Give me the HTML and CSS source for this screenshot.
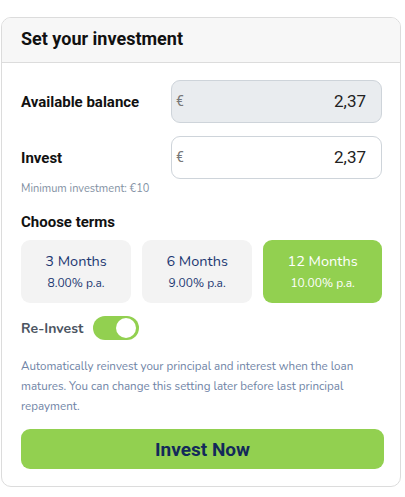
FILE: index.html
```html
<!DOCTYPE html>
<html>
<head>
<meta charset="utf-8">
<link rel="stylesheet" href="styles.css">
</head>
<body>
<div class="card">
  <div class="card-header">Set your investment</div>
  <div class="card-body">
    <div class="field-row">
      <div class="field-label">Available balance</div>
      <div class="amount amount-disabled"><span class="cur">€</span><span class="val">2,37</span></div>
    </div>
    <div class="field-row row-invest">
      <div class="field-label">Invest</div>
      <div class="amount"><span class="cur">€</span><span class="val">2,37</span></div>
    </div>
    <div class="hint">Minimum investment: €10</div>
    <div class="section-title">Choose terms</div>
    <div class="terms">
      <div class="term"><div class="term-months">3 Months</div><div class="term-rate">8.00% p.a.</div></div>
      <div class="term"><div class="term-months">6 Months</div><div class="term-rate">9.00% p.a.</div></div>
      <div class="term term-active"><div class="term-months">12 Months</div><div class="term-rate">10.00% p.a.</div></div>
    </div>
    <div class="reinvest">
      <span class="reinvest-label">Re-Invest</span>
      <span class="switch"><span class="knob"></span></span>
    </div>
    <p class="desc">Automatically reinvest your principal and interest when the loan matures. You can change this setting later before last principal repayment.</p>
    <button class="cta">Invest Now</button>
  </div>
</div>
</body>
</html>
```
FILE: styles.css
```css
* { box-sizing: border-box; }
html, body { margin: 0; padding: 0; background: #fff; }
body { padding: 17px 4px 0 1px; font-family: "Nunito", "Open Sans", sans-serif; }
.card {
  width: 400px;
  border: 1px solid #dcdcdc;
  border-radius: 10px;
  overflow: hidden;
  background: #fff;
}
.card-header {
  height: 45px;
  background: #f7f7f7;
  border-bottom: 1px solid #dcdcdc;
  padding: 0 19px 3px;
  display: flex;
  align-items: center;
  font-family: Roboto, sans-serif;
  font-weight: 700;
  font-size: 18px;
  color: #111;
}
.card-body { padding: 17px 18px 17px 19px; }
.field-row { display: flex; align-items: center; justify-content: space-between; }
.row-invest { margin-top: 13px; }
.field-label { font-family: Roboto, sans-serif; font-weight: 700; font-size: 15px; color: #111; }
.amount {
  width: 211px;
  height: 43px;
  border: 1px solid #ced4da;
  border-radius: 9px;
  display: flex;
  align-items: center;
  justify-content: space-between;
  padding: 0 15px 0 4px;
  background: #fff;
}
.amount-disabled { background: #e9ecef; }
.cur { font-family: Roboto, sans-serif; font-size: 14px; color: #777; margin-top: -2px; }
.val { font-family: Roboto, sans-serif; font-size: 17px; color: #222; margin-top: -2px; }
.hint { margin-top: 2px; font-size: 11px; line-height: 15px; color: #8391a3; }
.section-title { margin-top: 16px; font-family: Roboto, sans-serif; font-weight: 700; font-size: 15px; line-height: 20px; color: #111; }
.terms { margin-top: 8px; display: flex; gap: 11px; }
.term {
  flex: 1 1 auto;
  height: 63px;
  border-radius: 9px;
  background: #f3f3f3;
  display: flex;
  flex-direction: column;
  align-items: center;
  justify-content: center;
  color: #1d3872;
}
.term-months { font-size: 14.5px; line-height: 18px; margin-top: -1px; }
.term-rate { font-size: 12px; line-height: 16px; margin-top: 5px; }
.term-active { background: #92d050; color: #fff; }
.reinvest { margin-top: 13px; display: flex; align-items: center; height: 24px; }
.reinvest-label { font-weight: 700; font-size: 14px; color: #4b5461; }
.switch {
  margin-left: 10px;
  width: 46px;
  height: 24px;
  border-radius: 12px;
  background: #92d050;
  display: flex;
  align-items: center;
  justify-content: flex-end;
  padding: 0 3px;
}
.knob { width: 20px; height: 20px; border-radius: 50%; background: #fff; }
.desc { margin: 16px 0 0; font-size: 11.6px; line-height: 20px; color: #6f84a6; padding-right: 10px; }
.cta {
  display: block;
  margin-top: 13px;
  width: 363px;
  height: 40px;
  border: none;
  border-radius: 9px;
  background: #92d050;
  font-family: Roboto, sans-serif;
  font-weight: 700;
  font-size: 19px;
  color: #13295a;
}
```
